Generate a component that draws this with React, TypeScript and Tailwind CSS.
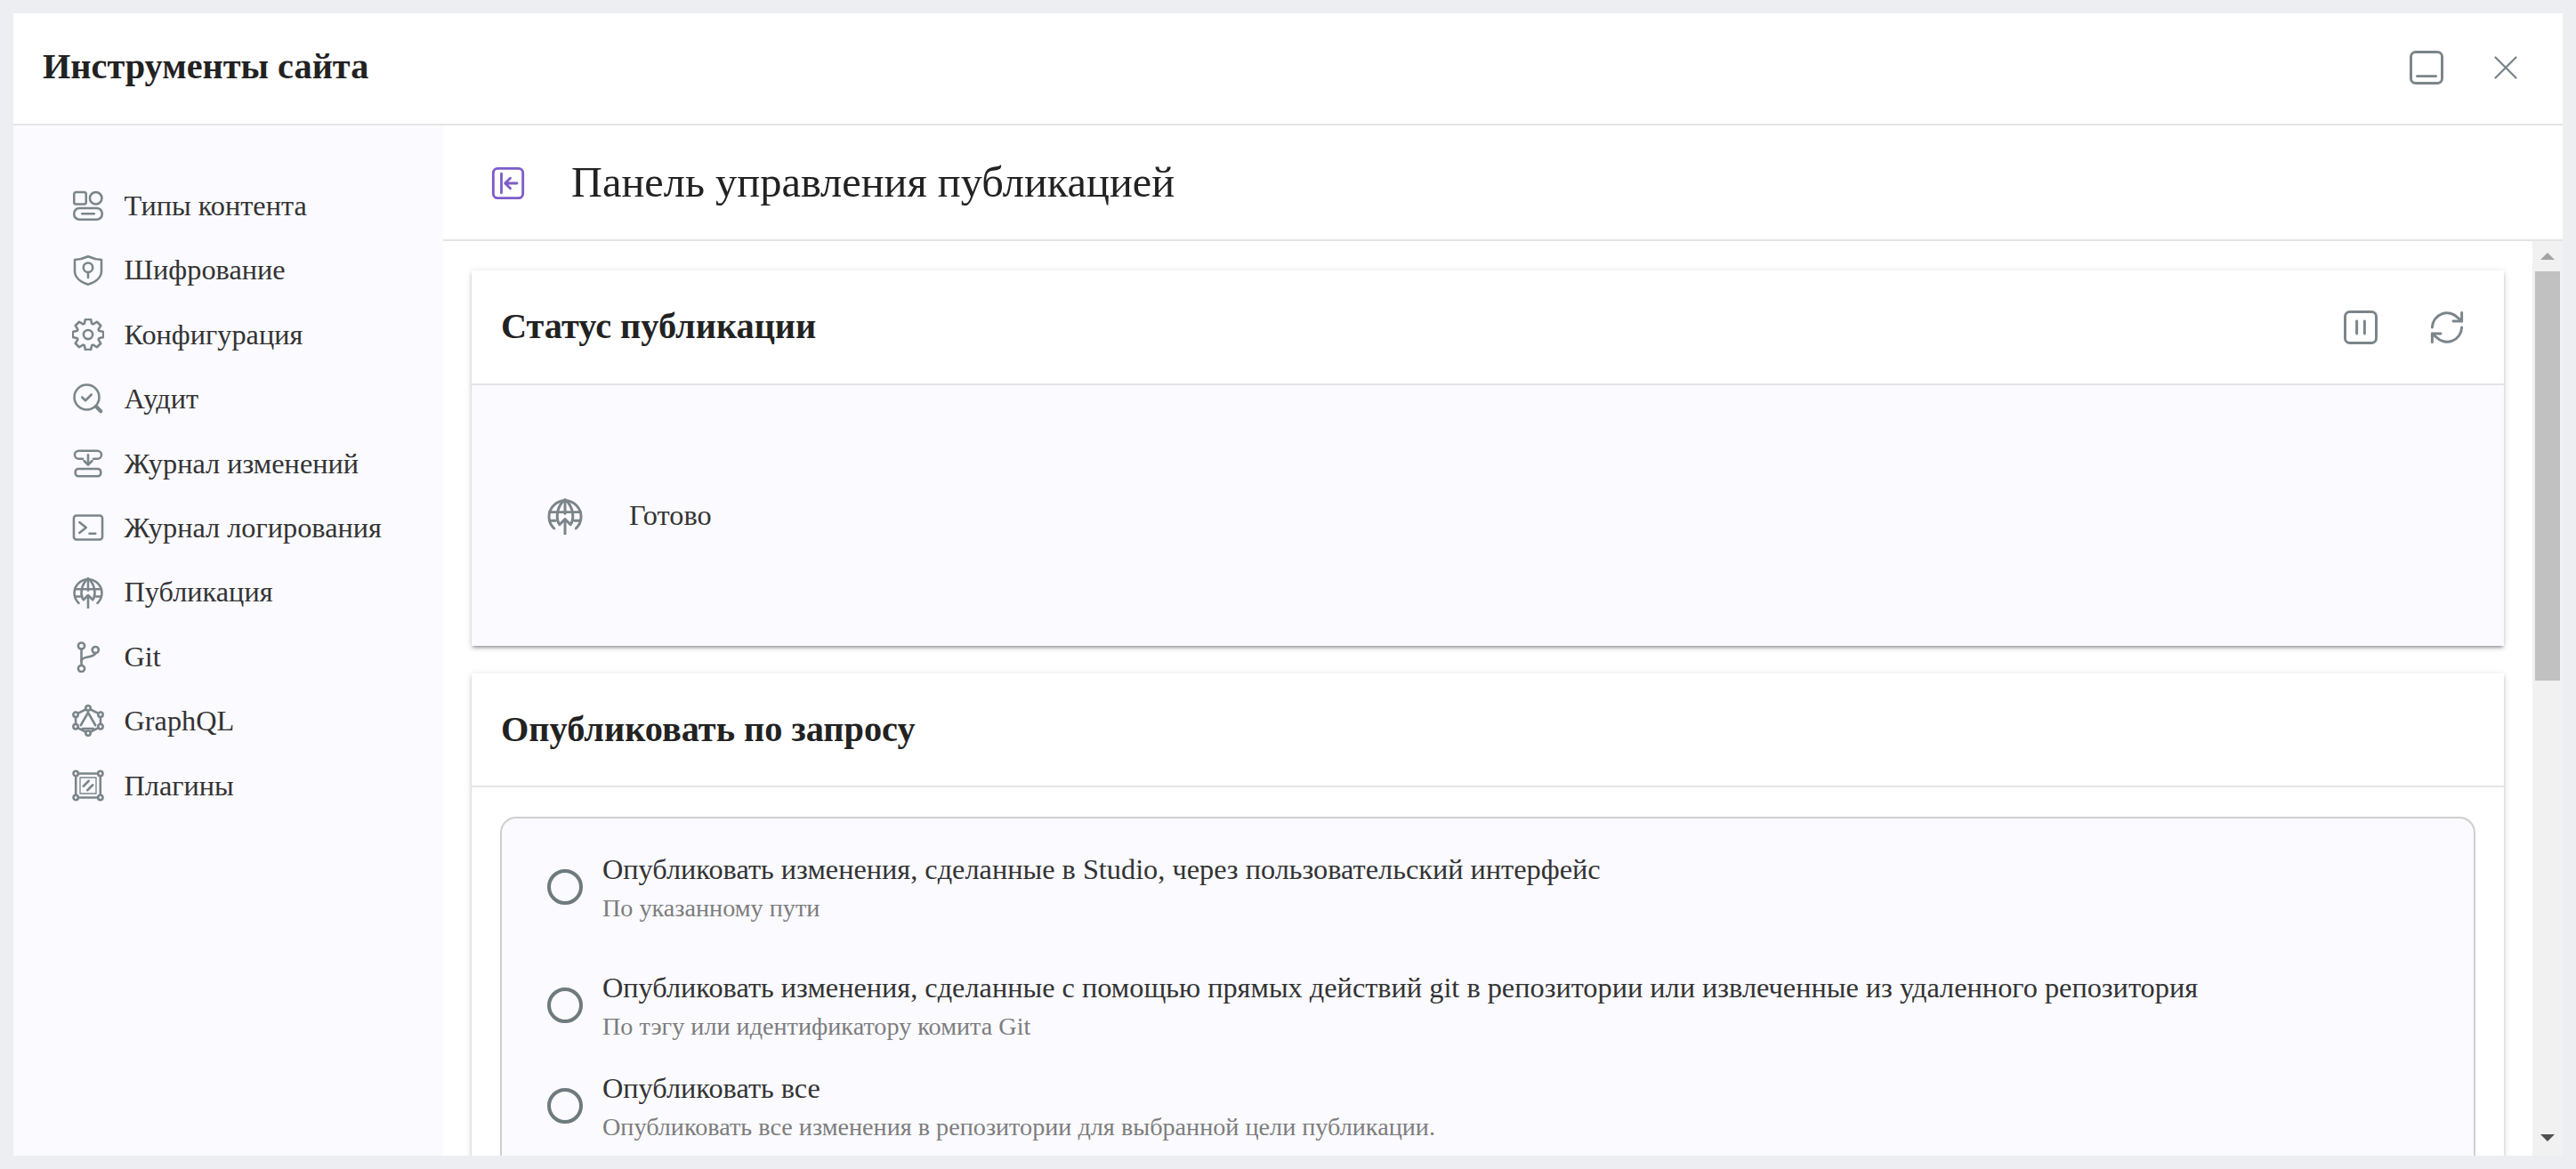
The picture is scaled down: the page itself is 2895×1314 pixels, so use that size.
import React from "react";
import { X } from "lucide-react";

type IconProps = { className?: string };

const Svg = ({ className, children }: IconProps & { children: React.ReactNode }) => (
  <svg
    viewBox="0 0 24 24"
    fill="none"
    stroke="currentColor"
    strokeWidth={1.7}
    strokeLinecap="round"
    strokeLinejoin="round"
    className={className}
  >
    {children}
  </svg>
);

const ContentTypesIcon = (p: IconProps) => (
  <Svg {...p}>
    <rect x="1.500" y="2" width="9" height="9" rx="1.500" />
    <circle cx="17.800" cy="6.500" r="4.500" />
    <rect x="1.500" y="14" width="21" height="8.500" rx="4" />
    <path d="M7.500 18.200h9" />
  </Svg>
);

const ShieldIcon = (p: IconProps) => (
  <Svg {...p}>
    <path d="M12 1.500c3.500 1.600 6.500 2.300 10 2.500v8.500c0 4.600-4.200 8.200-10 10-5.800-1.800-10-5.400-10-10V4c3.500-.2 6.500-.9 10-2.500Z" />
    <circle cx="12" cy="9.800" r="3.500" />
    <path d="M12 13.300v4" />
  </Svg>
);

// 8 tooth gear outline, angles in degrees round the centre of the 24 box
const gearPath = () => {
  const pt = (deg: number, r: number) => {
    const a = (deg * Math.PI) / 180;
    return `${(12 + r * Math.cos(a)).toFixed(2)} ${(12 + r * Math.sin(a)).toFixed(2)}`;
  };
  let d = "";
  for (let i = 0; i < 8; i++) {
    const c = i * 45 - 90;
    d += `${i === 0 ? "M" : "L"}${pt(c - 19, 8.6)} L${pt(c - 10, 11.6)} L${pt(c + 10, 11.6)} L${pt(c + 19, 8.6)} `;
  }
  return d + "Z";
};

const GearIcon = (p: IconProps) => (
  <Svg {...p}>
    <circle cx="12" cy="12" r="3.400" />
    <path d={gearPath()} />
  </Svg>
);

const AuditIcon = (p: IconProps) => (
  <Svg {...p}>
    <circle cx="11" cy="11" r="9.300" />
    <path d="m7.500 11 2.500 2.500 4.500-4.500" />
    <path d="m18.200 18.200 3.300 3.300" strokeWidth={2.800} />
  </Svg>
);

const ChangeLogIcon = (p: IconProps) => (
  <Svg {...p}>
    <path d="M8 8.500H5a2.800 2.800 0 0 1 0-6h14a2.800 2.800 0 0 1 0 6h-3" />
    <path d="M12 5.500v7M9 10l3 3 3-3" />
    <rect x="2.500" y="16" width="19" height="5.500" rx="2.200" />
  </Svg>
);

const TerminalIcon = (p: IconProps) => (
  <Svg {...p}>
    <rect x="1.300" y="3" width="21.400" height="18" rx="2" />
    <path d="m5.500 8 5 4-5 4M13 16.500h4.500" />
  </Svg>
);

const GlobeUploadIcon = (p: IconProps) => (
  <Svg {...p}>
    <path d="M5 20a10.300 10.300 0 1 1 14 0" />
    <path d="M2 9.500h20M2.300 15H6M18 15h3.700" />
    <path d="M12 1.500v9" />
    <path d="M7.800 16.500C6 12 7.200 5.800 11.500 1.800M16.200 16.500c1.800-4.500.6-10.700-3.700-14.700" />
    <path d="M12 23.500V14M8.500 17.500 12 14l3.500 3.500" />
  </Svg>
);

const GitIcon = (p: IconProps) => (
  <Svg {...p}>
    <circle cx="7" cy="4" r="2.400" />
    <circle cx="7" cy="21" r="2.400" />
    <circle cx="17.500" cy="7" r="2.400" />
    <path d="M7 6.400v12.200" />
    <path d="M7 15.500c0-1.500 1.500-2.500 4-3 3-.6 6-1 6.500-3.100" />
  </Svg>
);

const GraphqlIcon = (p: IconProps) => (
  <Svg {...p}>
    <circle cx="12" cy="2.600" r="1.800" />
    <circle cx="12" cy="21.400" r="1.800" />
    <circle cx="2.700" cy="7.500" r="1.800" />
    <circle cx="21.300" cy="7.500" r="1.800" />
    <circle cx="2.700" cy="16.500" r="1.800" />
    <circle cx="21.300" cy="16.500" r="1.800" />
    <path d="M13.600 3.500 19.700 6.600M10.400 3.500 4.300 6.600M2.700 9.300v5.400M21.300 9.300v5.400M4.300 17.400l6.100 3.100M19.700 17.400l-6.100 3.100" />
    <path d="M12 6 6.500 15.500M12 6l5.500 9.500M8 18h8" />
  </Svg>
);

const PluginIcon = (p: IconProps) => (
  <Svg {...p}>
    <circle cx="2.800" cy="3" r="1.800" />
    <circle cx="21.200" cy="3" r="1.800" />
    <circle cx="2.800" cy="21" r="1.800" />
    <circle cx="21.200" cy="21" r="1.800" />
    <path d="M4.600 3h14.800M4.600 21h14.800M2.800 4.800v14.400M21.200 4.800v14.400" />
    <rect x="6" y="6" width="12" height="12" strokeWidth={0.900} />
    <path d="m8.500 12.500 4-4M11.500 15.500l4-4" />
  </Svg>
);

const MinimizeIcon = (p: IconProps) => (
  <Svg {...p}>
    <rect x="2" y="2" width="20" height="20" rx="3" />
    <path d="M6 17.500h12" />
  </Svg>
);

const PauseIcon = (p: IconProps) => (
  <Svg {...p}>
    <rect x="2" y="2" width="20" height="20" rx="3" />
    <path d="M9.500 8v8M14.500 8v8" />
  </Svg>
);

const SyncIcon = (p: IconProps) => (
  <Svg {...p}>
    <path d="M2.500 12A9.500 9.500 0 0 1 19 5.800L21.500 8" />
    <path d="M21.500 2.500V8H16" />
    <path d="M21.500 12A9.500 9.500 0 0 1 5 18.200L2.500 16" />
    <path d="M2.500 21.500V16H8" />
  </Svg>
);

const CollapseIcon = (p: IconProps) => (
  <Svg {...p}>
    <rect x="2" y="2" width="20" height="20" rx="3" />
    <path d="M7.500 5.500v13M18 12h-7.500M13.500 8.500 10 12l3.500 3.500" />
  </Svg>
);

const navItems = [
  { label: "Типы контента", Icon: ContentTypesIcon },
  { label: "Шифрование", Icon: ShieldIcon },
  { label: "Конфигурация", Icon: GearIcon },
  { label: "Аудит", Icon: AuditIcon },
  { label: "Журнал изменений", Icon: ChangeLogIcon },
  { label: "Журнал логирования", Icon: TerminalIcon },
  { label: "Публикация", Icon: GlobeUploadIcon },
  { label: "Git", Icon: GitIcon },
  { label: "GraphQL", Icon: GraphqlIcon },
  { label: "Плагины", Icon: PluginIcon },
];

const publishOptions = [
  {
    title: "Опубликовать изменения, сделанные в Studio, через пользовательский интерфейс",
    hint: "По указанному пути",
    gap: "mb-[47px]",
  },
  {
    title:
      "Опубликовать изменения, сделанные с помощью прямых действий git в репозитории или извлеченные из удаленного репозитория",
    hint: "По тэгу или идентификатору комита Git",
    gap: "mb-[27px]",
  },
  {
    title: "Опубликовать все",
    hint: "Опубликовать все изменения в репозитории для выбранной цели публикации.",
    gap: "mb-8",
  },
];

const cardShadow =
  "shadow-[0_3px_3px_-2px_rgba(0,0,0,0.3),0_3px_4px_0_rgba(0,0,0,0.14),0_1px_8px_0_rgba(0,0,0,0.12)]";

export default function App() {
  return (
    <div className="flex h-screen w-full overflow-hidden bg-[#eceef1] p-[15px] font-['Liberation_Serif',serif] text-[#222]">
      <div className="flex min-w-0 flex-1 flex-col overflow-hidden bg-white">
        <header className="flex h-[126px] shrink-0 items-center justify-between border-b-2 border-[#e4e4e4] pb-[3px] pl-[33px] pr-[41px]">
          <h1 className="text-[40.3px] font-bold leading-none">Инструменты сайта</h1>
          <div className="flex items-center gap-[45px] text-[#7b858a]">
            <MinimizeIcon className="size-[42px]" />
            <X className="size-[46px]" strokeWidth={1.2} />
          </div>
        </header>

        <div className="flex min-h-0 flex-1">
          <nav className="flex w-[483px] shrink-0 flex-col bg-[#fafaff] pl-[66px] pt-[54px]">
            {navItems.map(({ label, Icon }) => (
              <div key={label} className="flex h-[72.4px] items-center gap-[22.5px]">
                <Icon className="size-[36px] shrink-0 text-[#7b858a]" />
                <span className="text-[32.3px] leading-none text-[#333]">{label}</span>
              </div>
            ))}
          </nav>

          <main className="flex min-w-0 flex-1 flex-col">
            <div className="flex h-[130px] shrink-0 items-center gap-[51px] border-b-2 border-[#e4e4e4] pl-[53px] pt-[1px]">
              <CollapseIcon className="size-[40px] text-[#7e5cc9]" />
              <h2 className="text-[48.4px] font-normal leading-none">Панель управления публикацией</h2>
            </div>

            <div className="flex min-h-0 flex-1">
              <div className="flex min-w-0 flex-1 flex-col gap-[31px] overflow-hidden px-8 pt-[33px]">
                <section className={`shrink-0 bg-white ${cardShadow}`}>
                  <div className="flex h-[129px] items-center justify-between border-b-2 border-[#e4e4e4] pl-[33px] pr-[43px]">
                    <h3 className="text-[40.3px] font-bold leading-none">Статус публикации</h3>
                    <div className="flex items-center gap-[55px] text-[#7b858a]">
                      <PauseIcon className="size-[42px]" />
                      <SyncIcon className="size-[42px]" />
                    </div>
                  </div>
                  <div className="flex h-[293px] items-center gap-[51px] bg-[#fafaff] pl-[84px]">
                    <GlobeUploadIcon className="size-[42px] text-[#7b858a]" />
                    <span className="text-[32.3px] leading-none text-[#333]">Готово</span>
                  </div>
                </section>

                <section className={`shrink-0 bg-white ${cardShadow}`}>
                  <div className="flex h-[128px] items-center border-b-2 border-[#e4e4e4] pl-[33px]">
                    <h3 className="text-[40.3px] font-bold leading-none">Опубликовать по запросу</h3>
                  </div>
                  <div className="px-8 pt-[33px]">
                    <div className="rounded-[18px] border-2 border-[#cfcfd2] bg-[#fafaff] pl-[51px] pt-[36px]">
                      {publishOptions.map((o) => (
                        <div key={o.hint} className={`flex items-center gap-[22px] ${o.gap}`}>
                          <span className="mb-[5px] size-[40px] shrink-0 rounded-full border-[4px] border-[#6f7a7e]" />
                          <div>
                            <div className="text-[32.3px] leading-[43px] text-[#333]">{o.title}</div>
                            <div className="text-[28.2px] leading-[43px] text-[#7d7d7d]">{o.hint}</div>
                          </div>
                        </div>
                      ))}
                    </div>
                  </div>
                </section>
              </div>

              <div className="flex w-[34px] shrink-0 flex-col items-center bg-[#f1f1f1]">
                <div className="flex h-[34px] w-full items-center justify-center">
                  <svg viewBox="0 0 16 8" className="h-[8px] w-[16px] fill-[#a3a3a3]">
                    <path d="M8 0 16 8H0Z" />
                  </svg>
                </div>
                <div className="h-[460px] w-[28px] bg-[#c1c1c1]" />
                <div className="mt-auto flex h-[24px] w-full items-start justify-center">
                  <svg viewBox="0 0 16 8" className="h-[8px] w-[16px] fill-[#505050]">
                    <path d="M0 0H16L8 8Z" />
                  </svg>
                </div>
              </div>
            </div>
          </main>
        </div>
      </div>
    </div>
  );
}
